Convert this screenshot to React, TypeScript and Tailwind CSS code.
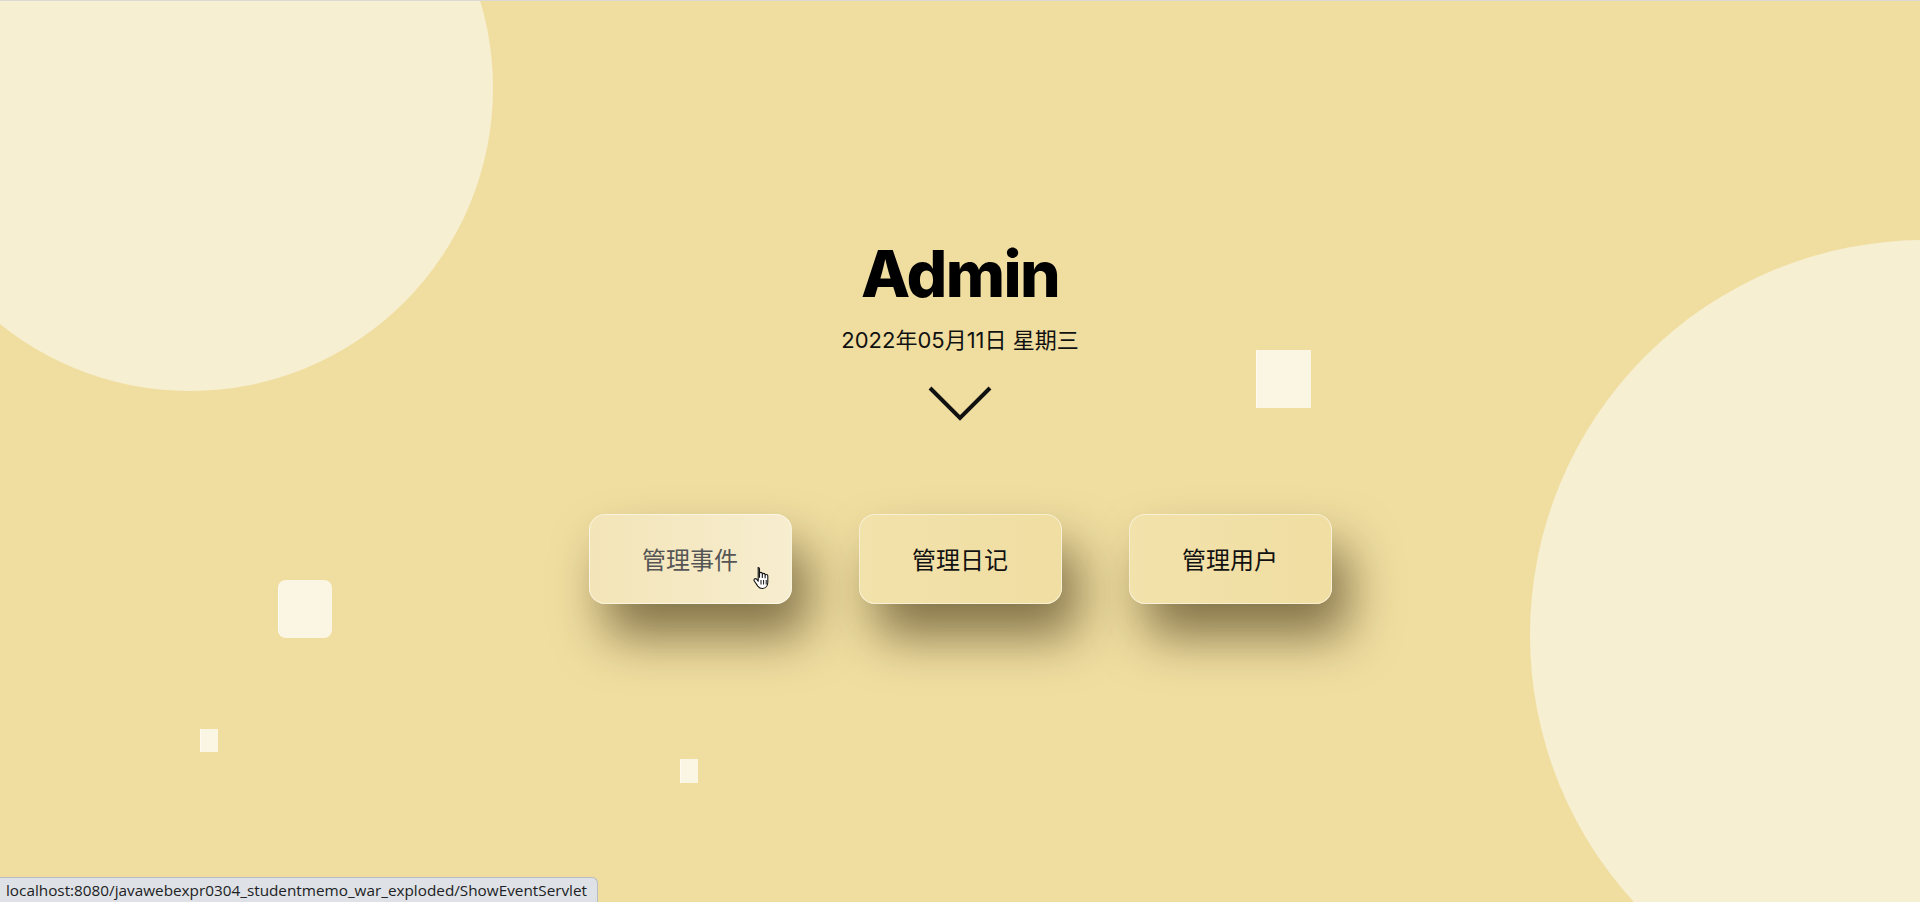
import React from "react";

type Deco = {
  className: string;
};

// floating squares scattered over the background
const squares: Deco[] = [
  { className: "left-[1256px] top-[350px] w-[55px] h-[58px]" },
  { className: "left-[278px] top-[580px] w-[54px] h-[58px] rounded-lg" },
  { className: "left-[200px] top-[729px] w-[18px] h-[23px]" },
  { className: "left-[680px] top-[759px] w-[18px] h-[24px]" },
];

const links = [
  { label: "管理事件", href: "ShowEventServlet", hover: true },
  { label: "管理日记", href: "ShowDiaryServlet", hover: false },
  { label: "管理用户", href: "ShowUserServlet", hover: false },
];

function HandCursor() {
  return (
    <svg
      width="17"
      height="24"
      viewBox="0 0 17 24"
      className="absolute left-[753px] top-[566px] z-20"
    >
      <path
        d="M5 1.5c.9 0 1.5.6 1.5 1.5v8.2V7.8c0-.8.6-1.4 1.4-1.4s1.4.6 1.4 1.4v3.6-2.6c0-.8.6-1.4 1.4-1.4s1.4.6 1.4 1.4v3-2c0-.8.6-1.3 1.3-1.3.8 0 1.4.6 1.4 1.3v6.4c0 3.6-2.4 6.3-5.8 6.3H9.3c-2 0-3.3-.8-4.5-2.4L1.3 15c-.5-.7-.4-1.6.3-2.1.7-.5 1.5-.3 2 .3l1.6 2V3c0-.9-.1-1.5-.2-1.5z"
        fill="#fff"
        stroke="#111"
        strokeWidth="1.1"
        strokeLinejoin="round"
      />
      <path d="M8 14v4.5M10.6 14v4.5M13.2 14v4.5" stroke="#111" strokeWidth="1" />
    </svg>
  );
}

export default function App() {
  return (
    <div className="relative h-[902px] w-full overflow-hidden bg-[#f0dea0] font-['Inter','Noto_Sans_CJK_SC',sans-serif]">
      {/* thin browser edge at the very top */}
      <div className="absolute inset-x-0 top-0 z-30 h-px bg-[#d9d9d6]" />

      {/* big circles */}
      <div className="absolute left-[-113px] top-[-215px] h-[606px] w-[606px] rounded-full bg-[#f7efd2]" />
      <div className="absolute left-[1530px] top-[240px] h-[790px] w-[790px] rounded-full bg-[#f7efd2]" />

      {squares.map((sq, i) => (
        <div
          key={i}
          className={`absolute border-l border-white/60 bg-white/70 ${sq.className}`}
        />
      ))}

      {/* main content */}
      <div className="relative z-10 flex flex-col items-center pt-[242px]">
        <h1 className="text-[64px] leading-none font-extrabold tracking-tight text-black">
          Admin
        </h1>
        <p className="mt-[19px] text-[22px] leading-[30px] text-[#111]">
          2022年05月11日 星期三
        </p>
        <svg width="64" height="36" viewBox="0 0 64 36" className="mt-[31px]">
          <polyline
            points="2,2 32,32 62,2"
            fill="none"
            stroke="#111"
            strokeWidth="4"
          />
        </svg>

        <div className="mt-[92px] flex gap-[67px]">
          {links.map((link) => (
            <a
              key={link.href}
              href={link.href}
              className={`flex h-[90px] w-[203px] items-center justify-center rounded-2xl border border-white/50 text-[24px] font-['Noto_Sans_CJK_SC',sans-serif] shadow-[16px_32px_50px_rgba(40,28,0,0.55)] ${
                link.hover
                  ? "bg-gradient-to-r from-[#f3e5b8] to-[#f7edcf] text-[#555]"
                  : "bg-gradient-to-r from-[#f2e2ab] to-[#f0dea2] text-[#111]"
              }`}
            >
              {link.label}
            </a>
          ))}
        </div>
      </div>

      <HandCursor />

      {/* status bubble */}
      <div className="absolute bottom-0 left-0 z-30 flex h-[25px] items-center rounded-tr-md border-t border-r border-[#b9bcc1] bg-[#dee1e6] pl-[6px] pr-[10px] font-['Open_Sans',sans-serif] text-[15.3px] text-[#202124]">
        localhost:8080/javawebexpr0304_studentmemo_war_exploded/ShowEventServlet
      </div>
    </div>
  );
}
